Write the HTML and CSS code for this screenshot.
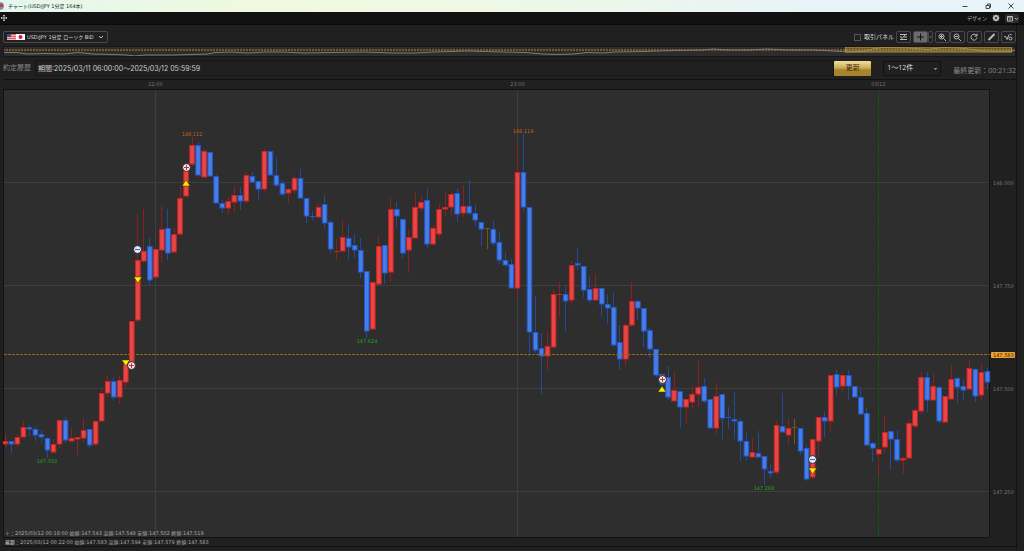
FILE: index.html
```
<!DOCTYPE html>
<html lang="ja">
  <head>
    <meta charset="UTF-8" />
    <meta name="viewport" content="width=device-width, initial-scale=1.0" />
    <title>チャート(USD/JPY 1分足 164本)</title>
    <link rel="stylesheet" href="styles.css">
  </head>
  <body>
    <header class="titlebar">
      <svg class="app-icon" viewBox="0 0 5 8"><circle cx="0" cy="4" r="4" fill="#8d93ad" /><path d="M0 2h3v3H0z" fill="#c8394a" /></svg>
      <h1>チャート(USD/JPY 1分足 164本)</h1>
      <div class="window-buttons">
        <button aria-label="最小化"><svg viewBox="0 0 8 8"><path d="M1.500 4.500h5" /></svg></button>
        <button aria-label="元に戻す"><svg viewBox="0 0 8 8"><path d="M2 3.500h3.500v3H2zM3.500 3.500v-1.500h3v3.500h-1" /></svg></button>
        <button aria-label="閉じる"><svg viewBox="0 0 8 8"><path d="M1.500 1.500l5 5M6.500 1.500l-5 5" /></svg></button>
      </div>
    </header>

    <div class="menubar">
      <svg class="move-icon" viewBox="0 0 8 8"><path d="M4 1v6M1 4h6M3 2l1-1 1 1M3 6l1 1 1-1M2 3L1 4l1 1M6 3l1 1-1 1" /></svg>
      <div class="menubar-right">
        <span>デザイン</span>
        <button aria-label="設定"><svg class="gear" viewBox="0 0 8 8"><circle cx="4" cy="4" r="2" stroke-width="2" /><path d="M4 .5v1.500M4 6v1.500M.5 4H2M6 4h1.500M1.500 1.500l1 1M5.500 5.500l1 1M6.500 1.500l-1 1M2.500 5.500l-1 1" /></svg></button>
        <button class="layout-button" aria-label="レイアウト"><svg viewBox="0 0 14 8"><path d="M2.500 2h5v4.500h-5zM2.500 2.500h5M4 4.500h2M10 3.500l1.500 1.500L13 3.500" /></svg></button>
      </div>
    </div>

    <main>
      <div class="controls">
        <button class="symbol">
          <svg class="flags" viewBox="0 0 18 6">
            <rect width="9" height="6" fill="#f3b9b9" />
            <path d="M0 .5h9M0 2.500h9M0 4.500h9" stroke="#e45a5f" />
            <rect width="4" height="3" fill="#3b4d9a" />
            <rect x="9" width="9" height="6" fill="#fff" />
            <circle cx="13.500" cy="3" r="2" fill="#e0182d" />
          </svg>
          <span>USD/JPY 1分足 ローソク BID</span>
          <svg class="chevron" viewBox="0 0 6 4"><path d="M1 1l2 2 2-2" /></svg>
        </button>
        <div class="tools">
          <label><input type="checkbox">取引パネル</label>
          <button class="tool" aria-label="テクニカル"><svg viewBox="0 0 13 10"><path d="M3 2.500h7M3 5h2M7 5h3M3 7.500h7M4.500 7l4-4.500" /></svg></button>
          <button class="tool cross" aria-label="十字線"><svg viewBox="0 0 13 10"><path d="M6.500 1.500v7M3 5h7" /></svg></button>
          <button class="tool arrow" aria-label="十字線の種類"><svg viewBox="0 0 5 10"><path d="M1 4l1.500 2L4 4" /></svg></button>
          <button class="tool join" aria-label="拡大"><svg viewBox="0 0 13 10"><circle cx="5.500" cy="4.500" r="2.500" /><path d="M7.500 6.500L10 9M4 4.500h3M5.500 3v3" /></svg></button>
          <button class="tool" aria-label="縮小"><svg viewBox="0 0 13 10"><circle cx="5.500" cy="4.500" r="2.500" /><path d="M7.500 6.500L10 9M4 4.500h3" /></svg></button>
          <button class="tool" aria-label="再読込"><svg viewBox="0 0 13 10"><path d="M8.500 3.500a3 3 0 1 0 .5 2M9 1.500v2.500H6.500" /></svg></button>
          <button class="tool" aria-label="描画"><svg viewBox="0 0 13 10"><path d="M3.500 8l6-6" stroke-width="2" /></svg></button>
          <button class="tool" aria-label="ライン表示"><svg viewBox="0 0 13 10"><path d="M2 4.500h1.500L5 7.500l2-5" /><circle cx="8.500" cy="6.500" r="1.500" /><path d="M8 2.500h1.500" /></svg></button>
        </div>
      </div>

      <svg class="overview" viewBox="0 0 1013 11">
        <path class="overview-price" d="M0 4h1013" />
        <polyline points="0,6.500 14,6.500 24,8 42,7.500 60,8 75,6.500 90,8 110,8.500 124,9 132,10 142,9 155,9 170,9 190,8.500 205,8 212,6.500 228,6 245,7 262,6 280,6 300,7 330,6.500 360,6 390,7 412,7 430,6 465,5 500,6 522,6.500 540,8 553,8.500 570,8 585,6.500 600,7 612,6 640,5.500 670,4.500 700,4 710,3 725,4 745,4 765,3 785,4 810,4 830,5 845,6 862,5.500 870,3 880,1.500 905,2 925,3.500 940,1.500 955,2 965,3 980,5 995,5.500 1008,5.500 1013,4" />
        <rect class="overview-range" x="842.500" y="1" width="166" height="5" />
      </svg>

      <form class="history">
        <span class="history-title">約定履歴</span>
        <input class="period" type="text" aria-label="期間" value="期間:2025/03/11 06:00:00～2025/03/12 05:59:59" readonly>
        <button type="button" class="update">更新</button>
        <select aria-label="表示件数">
          <option>1～12件</option>
        </select>
        <span class="updated">最終更新：00:21:32</span>
      </form>

      <section class="chart-panel">
        <div class="chart-area">
          <svg id="chart" viewBox="0 0 1013 458"></svg>
          <p class="cursor-values">＋：2025/03/12 00:18:00 始値:147.543 高値:147.549 安値:147.502 終値:147.519</p>
        </div>
        <p class="last-values"><b>最新</b>：2025/03/12 00:22:00 始値:147.583 高値:147.594 安値:147.579 終値:147.583</p>
      </section>
    </main>
    <script src="chart.js"></script>
  </body>
</html>
```
FILE: styles.css
```
* {
  box-sizing: border-box;
}
body {
  margin: 0;
  background-color: #202020;
  color: #bbb;
  font-family: "DejaVu Sans", "Noto Sans CJK JP", sans-serif;
  font-size: 7px;
  line-height: 10px;
}
h1,
p {
  margin: 0;
  font-weight: normal;
}
button,
input,
select {
  margin: 0;
  padding: 0;
  border: 0;
  background: none;
  color: inherit;
  font: inherit;
}
svg {
  display: block;
  fill: none;
  stroke: #bbb;
  stroke-width: 1;
}
.titlebar {
  display: flex;
  align-items: center;
  height: 12px;
  background: linear-gradient(to right, #e3f7ee, #f0f9df 25%, #eef8e6 50%, #e8f3f8 80%, #e8f3fa);
  color: #222;
}
.titlebar h1 {
  flex: 1;
  padding-left: 3px;
  font-size: 5px;
}
.app-icon {
  width: 5px;
  height: 8px;
  stroke: none;
}
.window-buttons {
  display: flex;
  gap: 15px;
  padding-right: 9px;
}
.window-buttons svg {
  width: 8px;
  height: 8px;
  stroke: #444;
}
.menubar {
  display: flex;
  align-items: center;
  justify-content: space-between;
  height: 13px;
  border-bottom: 1px solid #0a0a0a;
  background-color: #111;
}
.move-icon {
  width: 8px;
  height: 8px;
}
.menubar-right {
  display: flex;
  align-items: center;
  gap: 5px;
  padding-right: 5px;
  font-size: 5px;
}
.gear {
  width: 8px;
  height: 8px;
}
.layout-button {
  border-radius: 2px;
  background-color: #2c2c2c;
}
.layout-button svg {
  width: 14px;
  height: 9px;
}
main {
  margin-right: 7px;
  padding: 6px 0 3px 3px;
  border-right: 1px solid #111;
}
.controls {
  display: flex;
  align-items: center;
  justify-content: space-between;
  height: 12px;
}
.symbol {
  display: flex;
  align-items: center;
  gap: 2px;
  height: 12px;
  padding: 0 3px;
  border: 1px solid #4a4a4a;
  border-radius: 2px;
  font-size: 5px;
  color: #ddd;
}
.flags {
  width: 18px;
  height: 6px;
  stroke: none;
}
.chevron {
  width: 6px;
  height: 4px;
  margin-left: 2px;
}
.tools {
  display: flex;
  align-items: center;
}
.tools label {
  display: flex;
  align-items: center;
  gap: 3px;
  font-size: 6px;
  color: #ddd;
}
.tools input {
  appearance: none;
  width: 7px;
  height: 7px;
  border: 1px solid #555;
}
.tool {
  height: 12px;
  margin-left: 2px;
  border: 1px solid #484848;
  border-radius: 2px;
}
.tool svg {
  width: 13px;
  height: 10px;
}
.tool.cross {
  background-color: #6b6b6b;
}
.tool.cross svg {
  stroke: #111;
}
.tool.arrow {
  margin-left: 0;
}
.tool.arrow svg {
  width: 3px;
}
.tool.join + .tool {
  margin-left: 0;
}
.overview {
  width: 100%;
  margin-top: 3px;
  background-color: #2c2c2c;
  outline: 1px solid #161616;
  outline-offset: -1px;
}
.overview polyline {
  stroke: #7c7c7c;
}
.overview-price {
  stroke: #7d5722;
  stroke-width: 2;
  stroke-dasharray: 2 1;
}
.overview-range {
  fill: #c9a42f;
  fill-opacity: 0.4;
  stroke: #a88f44;
}
.history {
  display: flex;
  align-items: center;
  height: 16px;
  margin: 3px 0;
}
.history-title {
  width: 32px;
  color: #888;
}
.period {
  flex: 1;
  min-width: 0;
  height: 16px;
  padding-left: 2px;
  border: 1px solid #161616;
  color: #ccc;
  font-family: Inter, "Noto Sans CJK JP", sans-serif;
}
.update {
  width: 37px;
  height: 15px;
  border-radius: 1px;
  background: linear-gradient(#f1dfa0, #cdae58 45%, #a8862f 60%, #a8832a);
  color: #3a2c08;
}
.history select {
  appearance: none;
  width: 58px;
  height: 15px;
  margin: 0 12px;
  padding-left: 3px;
  border: 1px solid #111;
  border-radius: 1px;
  color: #ddd;
  font-family: "Open Sans", "Noto Sans CJK JP", sans-serif;
  background: linear-gradient(45deg, transparent 50%, #888 50%) 50px 6px / 2px 2px no-repeat,
    linear-gradient(-45deg, transparent 50%, #888 50%) 52px 6px / 2px 2px no-repeat;
}
.updated {
  padding-top: 5px;
  color: #888;
  font-family: "Open Sans", "Noto Sans CJK JP", sans-serif;
}
.chart-panel {
  border-top: 1px solid #111;
  border-bottom: 1px solid #111;
}
.chart-area {
  position: relative;
}
#chart {
  width: 100%;
}
#chart text {
  font-size: 5px;
  stroke: none;
  fill: #777;
}
#chart .high {
  fill: #c4611c;
}
#chart .low {
  fill: #1fa01f;
}
#chart .tag-text {
  fill: #222;
}
.plot {
  fill: #2e2e2e;
  stroke: #111;
}
.grid {
  stroke: #3e3e3e;
}
.day-line {
  stroke: #056405;
  stroke-dasharray: 2 1;
}
.price-line {
  stroke: #9a6513;
  stroke-dasharray: 3 1;
}
.price-tag {
  fill: #f0a030;
  stroke: none;
}
.wick-r { stroke: #8a2020; }
.wick-b { stroke: #234a94; }
.wick-y { stroke: #6b5a12; }
.flat-r { stroke: #c92525; }
.flat-b { stroke: #2458c8; }
.flat-y { stroke: #6b5a12; }
.body-r { fill: #e84545; stroke: #c92525; }
.body-b { fill: #477de8; stroke: #2458c8; }
.buy {
  fill: #f8e4e4;
  stroke: #222;
}
.sell {
  fill: #e4eafa;
  stroke: #222;
}
.buy-sign { stroke: #d02c2c; }
.sell-sign { stroke: #3560d0; }
.fill-mark {
  fill: #ffee00;
  stroke: #333300;
  stroke-width: 0.5;
}
.cursor-values,
.last-values {
  font-size: 5px;
  line-height: 8px;
  color: #aaa;
}
.cursor-values {
  position: absolute;
  left: 2px;
  bottom: 1px;
}
.last-values {
  padding-left: 2px;
}
```
FILE: chart.js
```
// colour, high, body top, body bottom, low
const candles = [
  'r 434 441 444 447', 'b 441 441 444 453', 'r 434 437 444 447', 'r 421 427 437 437', 'b 425 427 429 436',
  'b 426 429 435 441', 'b 430 434 437 443', 'b 437 438 450 458', 'r 439 444 452 453', 'r 420 420 444 448',
  'b 417 420 440 443', 'r 429 438 441 441', 'r 437 437 439 455', 'r 418 430 438 442', 'b 429 429 445 448',
  'r 420 421 444 446', 'r 389 393 421 421', 'r 376 381 393 397', 'b 377 381 397 401', 'r 375 380 397 404',
  'r 362 364 382 389', 'r 321 321 364 366', 'r 215 260 320 323', 'r 209 251 261 263', 'b 238 246 280 285',
  'r 249 249 277 277', 'r 206 229 250 262', 'b 209 228 253 260', 'r 228 234 252 252', 'r 187 198 234 235',
  'r 164 164 196 196', 'r 137 145 164 166', 'b 142 145 175 177', 'r 149 151 177 177', 'b 152 152 176 176',
  'b 175 176 203 203', 'b 200 203 208 213', 'r 197 201 208 214', 'r 186 195 202 212', 'b 187 195 201 210',
  'r 172 175 201 203', 'b 172 176 182 183', 'b 181 181 189 200', 'r 149 151 189 193', 'b 151 151 175 175',
  'b 157 175 185 187', 'b 180 183 194 196', 'r 188 189 193 203', 'r 175 178 190 194', 'b 169 178 198 199',
  'b 198 198 216 223', 'b 211 216 217 220', 'r 203 207 217 217', 'b 195 204 223 229', 'b 220 222 249 254',
  'r 239 251 252 260', 'r 220 237 251 251', 'b 225 238 247 260', 'b 234 245 250 258', 'b 238 250 272 278',
  'b 271 271 331 338', 'r 282 282 329 330', 'r 236 246 284 285', 'b 245 245 273 284', 'r 198 209 272 282',
  'b 202 209 216 228', 'b 219 219 253 258', 'r 230 237 250 273', 'r 193 207 238 238', 'r 195 202 208 212',
  'b 188 200 244 248', 'r 225 228 244 246', 'r 204 209 234 238', 'r 191 207 209 217', 'r 191 194 207 217',
  'b 188 193 214 222', 'r 186 206 213 217', 'b 180 206 213 215', 'b 204 213 220 226', 'b 222 222 229 246',
  'y 228 228 229 249', 'b 220 229 243 246', 'b 232 242 260 264', 'b 252 260 265 266', 'b 259 264 288 288',
  'r 147 172 288 297', 'b 134 172 207 211', 'b 207 207 332 357', 'b 296 332 350 353', 'b 333 348 356 394',
  'r 331 346 356 370', 'r 290 294 347 349', 'r 282 294 295 317', 'b 286 294 301 332', 'r 261 265 300 305',
  'b 248 263 265 270', 'b 266 266 290 297', 'b 277 289 300 303', 'r 274 288 300 300', 'b 288 288 304 317',
  'b 294 304 308 324', 'b 292 307 345 345', 'b 325 342 359 370', 'r 324 325 359 366', 'r 282 301 325 327',
  'b 300 301 308 320', 'b 308 308 331 347', 'b 328 330 349 358', 'b 349 349 375 377', 'b 374 374 384 393',
  'b 366 377 397 400', 'r 372 390 401 401', 'b 391 391 407 428', 'r 399 399 407 424', 'r 386 394 402 409',
  'r 361 387 394 407', 'b 378 386 401 403', 'b 399 399 428 428', 'r 383 396 428 435', 'b 394 394 418 439',
  'b 407 417 418 429', 'b 392 419 421 439', 'b 418 421 441 461', 'b 433 441 456 461', 'r 438 452 457 457',
  'b 431 453 457 457', 'b 456 456 469 485', 'b 464 471 473 478', 'r 421 425 472 475', 'b 393 426 432 432',
  'r 418 428 435 445', 'y 419 427 428 444', 'b 428 428 451 455', 'b 444 448 479 481', 'r 439 439 477 479',
  'r 417 417 441 457', 'b 412 417 421 437', 'r 375 375 421 432', 'b 370 374 387 395', 'r 372 375 386 393',
  'b 370 375 386 400', 'b 386 386 397 397', 'b 387 397 414 414', 'b 407 413 445 446', 'b 442 443 448 462',
  'r 449 449 454 477', 'r 416 432 447 453', 'b 431 431 439 470', 'b 430 439 460 462', 'r 457 458 460 474',
  'r 420 423 458 458', 'r 408 410 426 428', 'r 372 377 411 414', 'b 372 377 400 412', 'r 374 386 400 400',
  'b 386 387 421 423', 'r 396 396 422 423', 'r 365 379 399 399', 'b 377 378 387 403', 'b 380 386 390 400',
  'r 360 368 389 389', 'b 368 369 396 402', 'r 363 372 395 400', 'b 368 371 382 388'
];

const STEP = 6.025;
const TOP = 80; // candle values start above the time axis
const xOf = i => 2.3 + i * STEP;
const yOf = v => v - TOP;

let out = '<rect class="plot" x="0.5" y="9.5" width="986" height="448" />';

[['148.000', 183], ['147.750', 286], ['147.500', 389], ['147.250', 492]].forEach(([label, v]) => {
  out += `<path class="grid" d="M1 ${yOf(v) - 0.5}h985" />`;
  out += `<text x="990" y="${yOf(v) + 2}">${label}</text>`;
});

[['22:00', 25], ['23:00', 85], ['03/12', 145]].forEach(([label, i]) => {
  const x = Math.floor(xOf(i)) + 0.5;
  out += `<path class="${i === 145 ? 'day-line' : 'grid'}" d="M${x} 10v447" />`;
  out += `<text x="${x}" y="6" text-anchor="middle">${label}</text>`;
});

candles.forEach((row, i) => {
  const [color, ...values] = row.split(' ');
  const [high, top, bottom, low] = values.map(v => yOf(Number(v)));
  const x = xOf(i);
  out += `<path class="wick-${color}" d="M${Math.floor(x) + 0.5} ${high}V${low}" />`;
  if (bottom - top < 2) {
    out += `<path class="flat-${color}" d="M${x - 2.7} ${top + 0.5}h5.4" />`;
  } else {
    out += `<rect class="body-${color}" x="${x - 2.3}" y="${top + 0.5}" width="4.6" height="${bottom - top - 0.5}" />`;
  }
});

out += `<path class="price-line" d="M1 ${yOf(354.5)}h986" />`;
out += `<rect class="price-tag" x="988" y="${yOf(352)}" width="24" height="6" rx="1" />`;
out += `<text class="tag-text" x="990" y="${yOf(357)}">147.583</text>`;

[['high', '148.112', 31, 136], ['high', '148.119', 86, 133], ['low', '147.332', 7, 463],
  ['low', '147.624', 60, 343], ['low', '147.268', 126, 490]].forEach(([type, label, i, v]) => {
  out += `<text class="${type}" x="${Math.round(xOf(i))}" y="${yOf(v)}" text-anchor="middle">${label}</text>`;
});

// order fills
[['up', 30, 183], ['down', 22, 280], ['down', 20, 363], ['up', 109, 389], ['down', 134, 471]].forEach(([dir, i, v]) => {
  const d = dir === 'up' ? 'l4 6h-8z' : 'l-4 -6h8z';
  out += `<path class="fill-mark" d="M${xOf(i)} ${yOf(v) + (dir === 'up' ? -3 : 3)}${d}" />`;
});
[['buy', 30, 167.5], ['buy', 21, 365.5], ['buy', 109, 379.5], ['sell', 22, 249.5], ['sell', 134, 459.5]].forEach(([side, i, v]) => {
  const x = Math.floor(xOf(i)) + 0.5;
  out += `<circle class="${side}" cx="${x}" cy="${yOf(v)}" r="4" />`;
  out += `<path class="${side}-sign" d="M${x - 2.5} ${yOf(v)}h5${side === 'buy' ? 'm-2.5 -2.5v5' : ''}" />`;
});

document.getElementById('chart').innerHTML = out;
```
